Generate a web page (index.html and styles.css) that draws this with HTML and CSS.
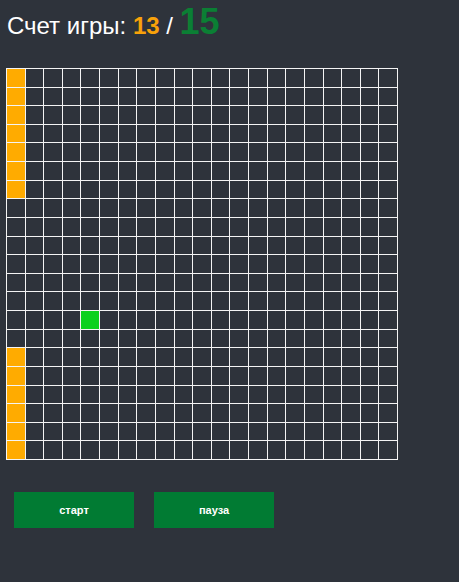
FILE: index.html
```html
<!DOCTYPE html>
<html lang="ru">
<head>
<meta charset="utf-8">
<link rel="stylesheet" href="styles.css">
</head>
<body>
<h1 class="score">Счет игры: <span class="cur">13</span> / <span class="max">15</span></h1>
<div class="board" id="board"></div>
<div class="controls">
  <button class="btn">старт</button>
  <button class="btn">пауза</button>
</div>
<script src="app.js"></script>
</body>
</html>
```
FILE: styles.css
```css
html, body {
  margin: 0;
  background: #2e333b;
}
body {
  font-family: "Liberation Sans", Arial, sans-serif;
  color: #fff;
  width: 459px;
  height: 582px;
  overflow: hidden;
}
.score {
  margin: 0;
  padding: 3px 0 0 7px;
  height: 60px;
  box-sizing: border-box;
  font-size: 24px;
  font-weight: normal;
  line-height: 38px;
  display: flex;
  align-items: baseline;
  white-space: pre;
}
.cur {
  color: #f8a20a;
  font-weight: bold;
}
.max {
  color: #0b7f34;
  font-weight: bold;
  font-size: 36px;
}
.board {
  margin: 8px 0 0 6px;
  width: 392px;
  height: 392px;
  box-sizing: border-box;
  padding: 1px;
  background: #f4f4f4;
  display: grid;
  grid-template-columns: repeat(21, 1fr);
  grid-template-rows: repeat(21, 1fr);
  gap: 1px;
}
.cell {
  background: #2e333b;
}
.cell.snake {
  background: #ffab00;
}
.cell.food {
  background: #0bd11f;
}
.controls {
  display: flex;
  gap: 20px;
  margin: 32px 0 0 14px;
}
.btn {
  width: 120px;
  height: 36px;
  border: none;
  background: #017b33;
  color: #fff;
  font-family: "Liberation Sans", Arial, sans-serif;
  font-weight: bold;
  font-size: 11px;
  padding: 0;
}
```
FILE: app.js
```js
var board = document.getElementById('board');
var snake = {};
[0,1,2,3,4,5,6,15,16,17,18,19,20].forEach(function(r){ snake[r*21] = true; });
var food = 13*21 + 4;
for (var i = 0; i < 441; i++) {
  var d = document.createElement('div');
  d.className = 'cell' + (snake[i] ? ' snake' : '') + (i === food ? ' food' : '');
  board.appendChild(d);
}
```
